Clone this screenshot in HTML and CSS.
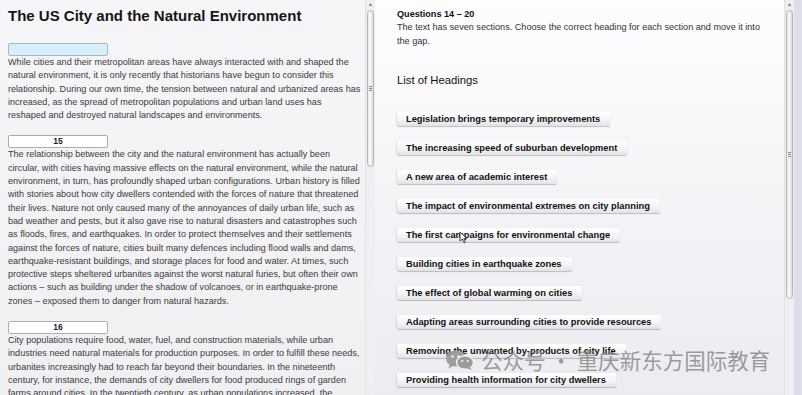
FILE: index.html
```html
<!DOCTYPE html>
<html lang="en">
<head>
    <meta charset="UTF-8">
    <title>Reading Passage 2</title>
    <link rel="stylesheet" href="styles.css">
</head>
<body>
    <div class="passage-pane">
        <div class="passage">
            <h1>The US City and the Natural Environment</h1>

            <div class="gap gap-active"></div>
            <p>While cities and their metropolitan areas have always interacted with and shaped the<br>
            natural environment, it is only recently that historians have begun to consider this<br>
            relationship. During our own time, the tension between natural and urbanized areas has<br>
            increased, as the spread of metropolitan populations and urban land uses has<br>
            reshaped and destroyed natural landscapes and environments.</p>

            <div class="gap">15</div>
            <p>The relationship between the city and the natural environment has actually been<br>
            circular, with cities having massive effects on the natural environment, while the natural<br>
            environment, in turn, has profoundly shaped urban configurations. Urban history is filled<br>
            with stories about how city dwellers contended with the forces of nature that threatened<br>
            their lives. Nature not only caused many of the annoyances of daily urban life, such as<br>
            bad weather and pests, but it also gave rise to natural disasters and catastrophes such<br>
            as floods, fires, and earthquakes. In order to protect themselves and their settlements<br>
            against the forces of nature, cities built many defences including flood walls and dams,<br>
            earthquake-resistant buildings, and storage places for food and water. At times, such<br>
            protective steps sheltered urbanites against the worst natural furies, but often their own<br>
            actions &ndash; such as building under the shadow of volcanoes, or in earthquake-prone<br>
            zones &ndash; exposed them to danger from natural hazards.</p>

            <div class="gap">16</div>
            <p>City populations require food, water, fuel, and construction materials, while urban<br>
            industries need natural materials for production purposes. In order to fulfill these needs,<br>
            urbanites increasingly had to reach far beyond their boundaries. In the nineteenth<br>
            century, for instance, the demands of city dwellers for food produced rings of garden<br>
            farms around cities. In the twentieth century, as urban populations increased, the<br>
            demand for resources reached further still.</p>
        </div>
        <div class="scrollbar">
            <span class="scroll-arrow">&#9652;</span>
            <div class="scroll-thumb passage-thumb"><span class="grip"></span></div>
        </div>
    </div>

    <div class="questions-pane">
        <div class="questions">
            <h2>Questions 14 &ndash; 20</h2>
            <p class="instructions">The text has seven sections. Choose the correct heading for each section and move it into<br>the gap.</p>

            <h3>List of Headings</h3>
            <ul class="headings">
                <li><span class="heading-btn">Legislation brings temporary improvements</span></li>
                <li><span class="heading-btn">The increasing speed of suburban development</span></li>
                <li><span class="heading-btn">A new area of academic interest</span></li>
                <li><span class="heading-btn">The impact of environmental extremes on city planning</span></li>
                <li><span class="heading-btn">The first campaigns for environmental change</span></li>
                <li><span class="heading-btn">Building cities in earthquake zones</span></li>
                <li><span class="heading-btn">The effect of global warming on cities</span></li>
                <li><span class="heading-btn">Adapting areas surrounding cities to provide resources</span></li>
                <li><span class="heading-btn">Removing the unwanted by-products of city life</span></li>
                <li><span class="heading-btn">Providing health information for city dwellers</span></li>
            </ul>
        </div>
        <div class="scrollbar">
            <span class="scroll-arrow">&#9652;</span>
            <div class="scroll-thumb questions-thumb"><span class="grip"></span></div>
        </div>
        <div class="window-edge"></div>
    </div>

    <!-- mouse pointer over the fifth heading -->
    <svg class="pointer" width="9" height="13" viewBox="0 0 9 13">
        <path d="M1 1 L1 10 L3.3 8 L5 11.8 L6.4 11.2 L4.8 7.6 L7.8 7.6 Z" fill="#fff" stroke="#333" stroke-width="0.9" stroke-linejoin="round"/>
    </svg>

    <!-- video watermark -->
    <div class="watermark">
        <svg class="wechat" width="30" height="20" viewBox="0 0 30 20">
            <ellipse cx="11" cy="8.5" rx="10" ry="8" fill="#9c9c9c"/>
            <path d="M5 14 L3.5 18.5 L9 15.5 Z" fill="#9c9c9c"/>
            <ellipse cx="20" cy="12.5" rx="8.5" ry="6.8" fill="#9c9c9c" stroke="#f3f3f6" stroke-width="1.4"/>
            <path d="M25 17 L26.5 20 L22 18.2 Z" fill="#9c9c9c"/>
            <circle cx="7.5" cy="6.5" r="1.3" fill="#f3f3f6"/>
            <circle cx="13.5" cy="6.5" r="1.3" fill="#f3f3f6"/>
            <circle cx="17.3" cy="11" r="1.1" fill="#f3f3f6"/>
            <circle cx="22.7" cy="11" r="1.1" fill="#f3f3f6"/>
        </svg>
        <span>公众号 · 重庆新东方国际教育</span>
    </div>
</body>
</html>
```

FILE: styles.css
```css
/* Page */
body {
    margin: 0;
    height: 395px;
    overflow: hidden;
    display: flex;
    font-family: "Liberation Sans", Arial, sans-serif;
    color: #333;
    position: relative;
}

/* Left: reading passage */
.passage-pane {
    width: 375px;
    display: flex;
    background: linear-gradient(#f6f6f8, #f0f0f3);
}

.passage {
    flex: 1;
    overflow: hidden;
    padding: 7px 0 0 8px;
}

.passage h1 {
    margin: 0 0 18px;
    font-size: 15px;
    line-height: 18px;
    font-weight: bold;
    color: #161616;
}

.passage p {
    margin: 0 0 13px;
    font-size: 9.1px;
    line-height: 13.3px;
    white-space: nowrap;
    color: #3a3a3a;
}

/* Drop gaps for headings */
.gap {
    width: 98px;
    height: 11px;
    border: 1px solid #a8adb3;
    border-radius: 2px;
    background: #fff;
    font-size: 8.5px;
    font-weight: bold;
    line-height: 11px;
    text-align: center;
    color: #222;
}

.gap-active {
    background: #d8eefa;
    border-color: #9fb9c9;
}

/* Scrollbars */
.scrollbar {
    width: 9px;
    display: flex;
    flex-direction: column;
    align-items: center;
    background: #efeff3;
    border-left: 1px solid #e2e2e6;
}

.scroll-arrow {
    font-size: 6px;
    line-height: 9px;
    height: 10px;
    color: #777;
}

.scroll-thumb {
    width: 7px;
    box-sizing: border-box;
    border: 1px solid #b4b4ba;
    border-radius: 4px;
    background: linear-gradient(to right, #e9e9ec, #fafafa 45%, #d9d9de);
    display: flex;
    align-items: center;
    justify-content: center;
}

.passage-thumb {
    height: 157px;
}

.questions-thumb {
    height: 289px;
}

.grip {
    width: 3px;
    height: 5px;
    background: repeating-linear-gradient(#8a8a90 0 1px, transparent 1px 2px);
}

/* Right: questions */
.questions-pane {
    flex: 1;
    display: flex;
    background: linear-gradient(#fdfdfe, #f6f6f9 40%, #ebebf1);
}

.questions {
    flex: 1;
    overflow: hidden;
    padding: 8px 0 0 22px;
}

.questions h2 {
    margin: 0;
    font-size: 9.1px;
    line-height: 13.3px;
    font-weight: bold;
    color: #111;
}

.instructions {
    margin: 0;
    font-size: 9.1px;
    line-height: 13.3px;
    color: #333;
}

.questions h3 {
    margin: 25px 0 0;
    font-size: 11.3px;
    line-height: 14px;
    font-weight: normal;
    color: #111;
}

.headings {
    list-style: none;
    margin: 21px 0 0;
    padding: 0;
}

.headings li {
    height: 14px;
    margin-bottom: 15px;
}

.heading-btn {
    display: inline-block;
    height: 14px;
    padding: 0 10px 0 9px;
    font-size: 9.3px;
    font-weight: bold;
    line-height: 14px;
    color: #111;
    background: linear-gradient(#ffffff, #f3f3f5 60%, #e2e2e6);
    border-radius: 2px;
    box-shadow: 0 1px 1px rgba(0, 0, 0, 0.22), -1px 0 1px rgba(0, 0, 0, 0.08);
}

.window-edge {
    width: 8px;
    background: #dcdfe9;
}

/* Overlays */
.pointer {
    position: absolute;
    left: 459px;
    top: 231px;
}

.watermark {
    position: absolute;
    left: 445px;
    top: 347px;
    display: flex;
    align-items: center;
    gap: 6px;
    font-family: "Noto Sans CJK SC", sans-serif;
    font-size: 21.5px;
    line-height: 26px;
    color: rgba(130, 130, 130, 0.78);
}
```
